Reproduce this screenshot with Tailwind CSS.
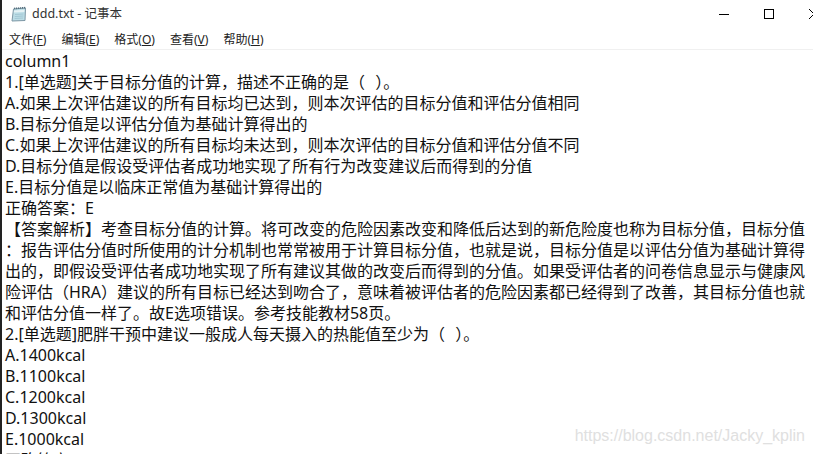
<!DOCTYPE html>
<html lang="zh-CN">
<head>
<meta charset="utf-8">
<script src="https://cdn.jsdelivr.net/npm/@tailwindcss/browser@4"></script>
</head>
<body class="bg-white">
<div class="w-[813px] h-[454px] overflow-hidden bg-white flex flex-col border-l-2 border-[#222222] text-[#111111] font-['Noto_Sans','Noto_Sans_CJK_SC',sans-serif]">
  <div class="h-[28px] shrink-0 flex items-center pl-[9px]">
    <svg class="w-[16px] h-[16px] shrink-0" viewBox="0 0 16 16">
      <path d="M2.5 3 L14.5 2 L14 14.5 L1 15 Z" fill="#bcdde6" stroke="#7d97a5" stroke-width="1"/>
      <path d="M3 4.5 L13.5 3.8 L13.3 6 L2.8 6.6 Z" fill="#e6f2f5"/>
      <path d="M4 8.5 L12.5 8 M3.8 10.5 L12.3 10 M3.6 12.5 L12.1 12" stroke="#9cc2cf" stroke-width="0.8"/>
      <path d="M3 2.5 L14.5 1.6" stroke="#56707f" stroke-width="1.6" stroke-dasharray="1.2 0.8"/>
    </svg>
    <span class="ml-[5px] text-[12.5px] text-[#333333]">ddd.txt - 记事本</span>
    <div class="ml-auto flex items-center -mr-[24px]">
      <div class="w-[45px] flex justify-center"><div class="w-[10px] h-px bg-black"></div></div>
      <div class="w-[45px] flex justify-center"><div class="w-[10px] h-[10px] border border-black"></div></div>
      <div class="w-[46px] flex justify-center">
        <svg class="w-[10px] h-[10px]" viewBox="0 0 10 10"><path d="M0 0 L10 10 M10 0 L0 10" stroke="#000" stroke-width="1"/></svg>
      </div>
    </div>
  </div>
  <div class="h-[22px] shrink-0 flex items-center pl-[7px] pt-[3px] gap-[15px] text-[12px] text-[#222222] border-b border-[#f0f0f0]">
    <span>文件(<u>F</u>)</span><span>编辑(<u>E</u>)</span><span>格式(<u>O</u>)</span><span>查看(<u>V</u>)</span><span>帮助(<u>H</u>)</span>
  </div>
  <div class="relative h-[404px] overflow-hidden pl-[3px] pt-px text-[16px] leading-[21px] whitespace-nowrap">
    <div>column1</div>
    <div>1.[单选题]关于目标分值的计算，描述不正确的是（<span class="mx-[3px]"> </span>）。</div>
    <div>A.如果上次评估建议的所有目标均已达到，则本次评估的目标分值和评估分值相同</div>
    <div>B.目标分值是以评估分值为基础计算得出的</div>
    <div>C.如果上次评估建议的所有目标均未达到，则本次评估的目标分值和评估分值不同</div>
    <div>D.目标分值是假设受评估者成功地实现了所有行为改变建议后而得到的分值</div>
    <div>E.目标分值是以临床正常值为基础计算得出的</div>
    <div>正确答案：E</div>
    <div>【答案解析】考查目标分值的计算。将可改变的危险因素改变和降低后达到的新危险度也称为目标分值，目标分值</div>
    <div>：报告评估分值时所使用的计分机制也常常被用于计算目标分值，也就是说，目标分值是以评估分值为基础计算得</div>
    <div>出的，即假设受评估者成功地实现了所有建议其做的改变后而得到的分值。如果受评估者的问卷信息显示与健康风</div>
    <div>险评估（HRA）建议的所有目标已经达到吻合了，意味着被评估者的危险因素都已经得到了改善，其目标分值也就</div>
    <div>和评估分值一样了。故E选项错误。参考技能教材58页。</div>
    <div>2.[单选题]肥胖干预中建议一般成人每天摄入的热能值至少为（<span class="mx-[3px]"> </span>）。</div>
    <div>A.1400kcal</div>
    <div>B.1100kcal</div>
    <div>C.1200kcal</div>
    <div>D.1300kcal</div>
    <div>E.1000kcal</div>
    <div>正确答案：A</div>
    <div class="absolute right-[8px] bottom-[8px] text-[16px] leading-[20px] text-[#e0e0e0] font-['Liberation_Sans',sans-serif]">https://blog.csdn.net/Jacky_kplin</div>
  </div>
</div>
</body>
</html>
